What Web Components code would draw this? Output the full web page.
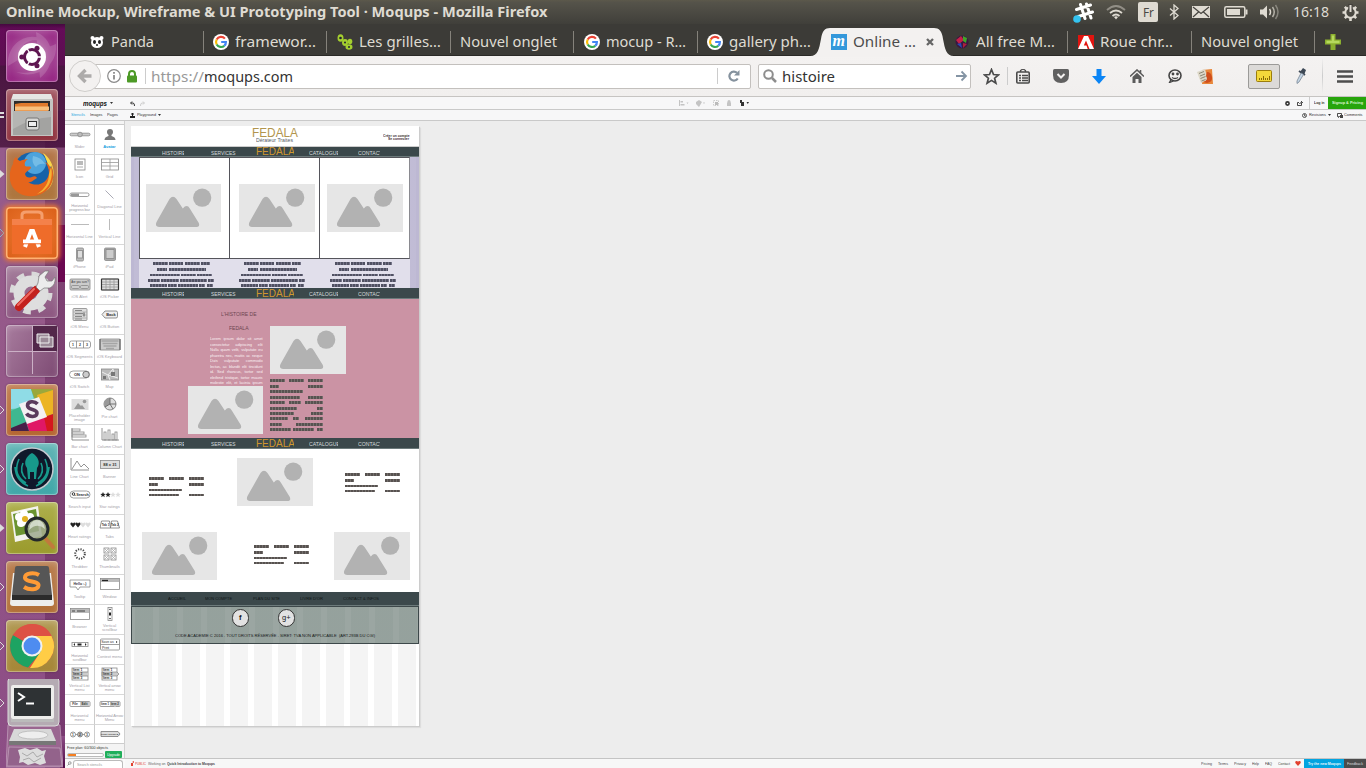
<!DOCTYPE html>
<html lang="fr">
<head>
<meta charset="utf-8">
<title>Online Mockup, Wireframe &amp; UI Prototyping Tool</title>
<style>
html,body{margin:0;height:100%;overflow:hidden}
body{font-family:"Noto Sans","Open Sans",sans-serif;width:1366px;height:768px;background:#ededed}
</style>
</head>
<body>
<desktop-shell></desktop-shell>
<script>
const define = (name, css, html, after) => customElements.define(name, class extends HTMLElement {
  constructor() {
    super();
    this.attachShadow({ mode: 'open' });
  }
  connectedCallback() {
    const body = typeof html === 'function' ? html(this) : html;
    this.shadowRoot.innerHTML = `<style>:host{display:block;box-sizing:border-box}*{box-sizing:border-box}${css}</style>${body}`;
    if (after) after(this);
  }
});

/* Text fitted to a given advance width; "clip" cuts the visible part. */
define('fit-text', `:host{display:flex;flex:none;white-space:nowrap}
:host([data-clip]){overflow-x:clip}
span{display:block;flex:none;line-height:1.3;transform-origin:0 50%;white-space:pre}`,
  el => `<span>${el.dataset.t.replace(/&/g, '&amp;')}</span>`,
  el => {
    const s = el.shadowRoot.querySelector('span');
    s.style.fontSize = el.dataset.s + 'px';
    const w = +el.dataset.w;
    el.style.width = (el.dataset.clip || w) + 'px';
    const n = s.getBoundingClientRect().width;
    if (n) s.style.transform = `scaleX(${w / n})`;
  });
const T = (t, w, s, style = '', clip = '') =>
  `<fit-text data-t="${t}" data-w="${w}" data-s="${s}" ${clip ? `data-clip="${clip}"` : ''} style="${style}"></fit-text>`;

const svg = (w, h, body, style = '') =>
  `<svg width="${w}" height="${h}" viewBox="0 0 ${w} ${h}" style="flex:none;display:block;${style}">${body}</svg>`;

/* ---------- top panel ---------- */
define('top-panel', `:host{height:24px;display:flex;align-items:center;background:linear-gradient(#5c594b 0,#55534a 10%,#403f3a 100%);color:#dfdbd2;padding-left:6px;position:relative}
svg{position:relative}`, () => `
${T('Online Mockup, Wireframe & UI Prototyping Tool · Moqups - Mozilla Firefox', 541.5, 14.5, 'font-weight:700;margin-top:-1px')}
<span style="flex:1"></span>
${svg(22, 22, `<g stroke="#fff" stroke-width="3" stroke-linecap="round"><path d="M8.5 3.5l4.5 14M14.500 3l4.500 14M4.500 8.500l14-4.500M6.500 15.500l14-4.500"/></g><circle cx="5" cy="18" r="3.800" fill="#34c3f0"/>`, 'margin-right:12px')}
${svg(20, 16, `<g fill="none" stroke="#dfdbd2" stroke-width="1.800"><path d="M1 6q9-8 18 0" opacity=".45"/><path d="M4 9q6-5 12 0"/><path d="M6.500 12q3.500-3 7 0"/></g><path d="M10 15.500l-2-2.500q2-1.500 4 0z" fill="#dfdbd2"/>`, 'margin-right:12px')}
<span style="width:20px;height:20px;background:#dfdbd2;border-radius:2px;color:#4a4843;display:flex;align-items:center;justify-content:center;margin-right:11px">${T('Fr', 11, 13)}</span>
${svg(10, 16, `<path d="M1 4.500l8 7-4 3.500V1l4 3.500-8 7" fill="none" stroke="#dfdbd2" stroke-width="1.300"/>`, 'margin-right:13px')}
${svg(18, 12, `<rect width="18" height="12" fill="#dfdbd2"/><path d="M1 1l8 6.500L17 1M1 11l5.500-5M17 11l-5.500-5" stroke="#45433e" stroke-width="1.200" fill="none"/>`, 'margin-right:14px')}
${svg(24, 12, `<rect x=".8" y=".8" width="20" height="10.400" rx="1.500" fill="none" stroke="#dfdbd2" stroke-width="1.500"/><rect x="3" y="3" width="13" height="6" fill="#dfdbd2"/><rect x="21.500" y="3.500" width="2" height="5" fill="#dfdbd2"/>`, 'margin-right:12px')}
${svg(20, 16, `<path d="M0 5.500h3l4-4v13l-4-4H0z" fill="#dfdbd2"/><g fill="none" stroke="#dfdbd2" stroke-width="1.500"><path d="M9.500 5q2 3 0 6"/><path d="M12.500 3q3.500 5 0 10" opacity=".7"/><path d="M15.500 1q5 7 0 14" opacity=".4"/></g>`, 'margin-right:13px')}
${T('16:18', 36, 15, 'margin:0 13px 0 0')}
${svg(17, 17, `<circle cx="8.500" cy="8.500" r="5.200" fill="none" stroke="#dfdbd2" stroke-width="2"/><g stroke="#dfdbd2" stroke-width="2.600"><path d="M8.500 13v4M4 8.500H.5M13 8.500h3.500M5.300 5.300L2.800 2.800M11.700 5.300l2.500-2.500M5.300 11.700l-2.500 2.500M11.700 11.700l2.500 2.500"/></g><path d="M8.500 0v8" stroke="#44423d" stroke-width="4.500"/><path d="M8.500 1v7" stroke="#dfdbd2" stroke-width="2"/>`, 'margin-right:7px')}`);

/* ---------- launcher ---------- */
const tile = (bg, body, mark = '') => `<div class="row"><i>${mark}</i><div class="t" style="background:${bg}">${svg(52, 52, body)}</div></div>`;
const arrow = `<svg width="5" height="10"><path d="M0 1l4.500 4L0 9z" fill="#ddd"/></svg>`;
const hollow = (c = '#ddd') => `<svg width="5" height="10"><path d="M0 1l4 4-4 4" fill="none" stroke="${c}"/></svg>`;
define('app-launcher', `:host{width:65px;height:744px;overflow:hidden;position:relative;padding-top:6px;
background:linear-gradient(#8c4d85,#4f0a46) 60px 712px/5px 32px no-repeat,linear-gradient(#6b0851,#6b0851) 58px 201px/7px 57px no-repeat,linear-gradient(rgba(70,10,60,.3),rgba(70,10,60,.3)) 45px 87px/20px 657px no-repeat,linear-gradient(#45083f 0,#640b58 5px,#5b1050 41px,#4a1541 42px,#54204a 123px,#965c8c 124px,#955889 360px,#8c4d85 100%)}
.row{display:flex;align-items:center;height:52px;margin-bottom:7.050px}
i{width:6px;display:flex}
.t{width:52px;height:52px;border-radius:4px;box-shadow:inset 0 0 0 1px rgba(255,255,255,.3),inset 0 2px 6px rgba(255,255,255,.25),0 0 2px rgba(30,0,30,.4)}
.s{height:89px}`, () =>
  tile('radial-gradient(#c89ac0 0,#a64b96 45%,#931f80 90%)', `<path d="M2 36C0 14 22-2 42 12 24 6 12 14 12 30M50 14c2 24-22 36-40 28 20 4 32-8 30-24M30 2c20 8 20 34 4 46" fill="#fff" opacity=".15"/><circle cx="26" cy="27" r="14" fill="#fff"/><circle cx="26" cy="27" r="7.500" fill="none" stroke="#5e1550" stroke-width="3"/><g stroke="#fff" stroke-width="1.400"><path d="M26 27h10M26 27l-5.500-9.500M26 27l-5.500 9.500"/></g><circle cx="26" cy="27" r="5" fill="#fff"/><g fill="#5e1550"><circle cx="15.800" cy="27" r="2.500"/><circle cx="31" cy="18.300" r="2.500"/><circle cx="31" cy="35.700" r="2.500"/></g>`) +
  tile('linear-gradient(#a05560,#8e2f3c)', `<path d="M7 5h38l2 6H5z" fill="#e5e5e3"/><path d="M5 10h42v37H5z" fill="#c4c4c2"/><path d="M8 12h36v10H8z" fill="#2c2c2c"/><path d="M9 15l6-1h27v8H9z" fill="#e07a2c"/><path d="M9 17.500h34v4H9z" fill="#f7c07d"/><path d="M7 22h38v24H7z" fill="#a3a3a1"/><path d="M7 22h38v6q-20 1-38 12z" fill="#b5b5b3"/><rect x="20" y="29" width="13" height="12" rx="2" fill="#d7d7d5" stroke="#777"/><rect x="22.500" y="32.500" width="8" height="5" fill="#eee" stroke="#333"/>`, '<svg width="5" height="10"><path d="M0 3h4M0 7h4" stroke="#ddd" stroke-width="2"/></svg>') +
  tile('linear-gradient(#b5774b,#ad763d)', `<circle cx="27" cy="24" r="20" fill="#1762a8"/><circle cx="29" cy="15" r="11" fill="#4da3dc"/><path d="M27 8q8 1 12 8-6-1-9 3-5-4-3-11z" fill="#8fcdec" opacity=".6"/><path d="M37 5c12 8 15 26 3 38 8-5 9-17 5-25-1 2-2 2-2 3-1-5-3-11-6-16z" fill="#f9d84b"/><path d="M43 13c7 10 5 26-6 32-12 7-26 2-31-7-4-8-2-17 1-22 0-3 1-5 3-7 1 2 2 3 4 4 2-1 5-2 8-2-3 2-4 4-3 7 2 1 4 0 6 1 0 3-5 4-6 7 1 4 4 4 7 3 2-1 4-1 5 1-4 2-5 5-9 4 9 6 20 1 21-9 0-5-2-9-4-11 3 1 5 4 6 7 1-3 0-5-2-8z" fill="#e5651c"/><path d="M45 19c3 12-3 24-14 27 8-5 12-12 12-20z" fill="#f7b233"/>`, arrow) +
  tile('radial-gradient(#ef7a33,#d95f18)', `<path d="M16 14V8q0-3 4-3h12q4 0 4 3v6" fill="none" stroke="#f59e6c" stroke-width="3"/><path d="M6 12h40v35H6z" fill="#ef6c2a"/><path d="M6 12h40v6H6z" fill="#f4814a"/><path d="M19 40l6-16h2l6 16" fill="none" stroke="#fff" stroke-width="4"/><path d="M17 34.500h18" stroke="#fff" stroke-width="4"/><path d="M16 36.800h20" stroke="#ef6c2a" stroke-width="1"/>`, hollow('#7cb7e2')).replace('class="t" style="', 'class="t" style="box-shadow:inset 0 0 0 1.5px #ffb273,0 0 5px 2px #f07a2c;') +
  tile('linear-gradient(#a57f9c,#8c5580)', `<circle cx="25" cy="27" r="19" fill="none" stroke="#d9d9d9" stroke-width="5" stroke-dasharray="7.500 7.420"/><circle cx="25" cy="27" r="12" fill="none" stroke="#dedede" stroke-width="11"/><path d="M30 22l8-8" stroke="#d8d8d8" stroke-width="6"/><path d="M13 41l17-17" stroke="#c3211d" stroke-width="8" stroke-linecap="round"/><path d="M12 39l16-16" stroke="#ee6a62" stroke-width="2" stroke-linecap="round"/><path d="M32 17l1-7 6-5 4 0-4 6 2 4 5 0 3-4q1 8-5 11l-6 0-4 3-4-4z" fill="#ececec" stroke="#777" stroke-width=".7"/>`) +
  tile('linear-gradient(120deg,#a87c9e,#7d4a73)', `<path d="M27 1h24v25H27z" fill="#52274a"/><path d="M26.500 1v48M2 26.500h48" stroke="#cbb0c6" stroke-width="1"/><g fill="#9b8b98" stroke="#eee"><path d="M31 9h12v9H31zM34 12h13v10H34z"/></g>`) +
  tile('linear-gradient(#bf7c4f,#b5652f)', `<rect x="5" y="5" width="42" height="42" rx="3" fill="#5bc5a7"/><path d="M5 5h20l5 18L5 25z" fill="#8fdce6"/><path d="M25 5h22v6l-18 5z" fill="#9aa83c"/><path d="M31 11l16-5v24l-10 4z" fill="#ecb424"/><path d="M5 27l13-6 7 18-20 5z" fill="#3eb890"/><path d="M20 37l20-4 4 14H23z" fill="#e01765"/><path d="M38 33l9-3v17h-6z" fill="#d5171d"/><path d="M5 44l15-6 3 9H5z" fill="#472048"/><path d="M13 20l20-7 8 20-20 7z" fill="#f4f0f2"/><path d="M31.500 20c-3-3.500-10-3-10 1.500 0 5 9.500 3 9.500 7.500 0 4.500-8 4.500-10.500 0.500" fill="none" stroke="#5b3a5c" stroke-width="3.600"/>`, hollow()) +
  tile('linear-gradient(#63b5b6,#3fa7a8)', `<circle cx="26" cy="26" r="21" fill="#10182a" stroke="#c4c9cf" stroke-width="1.500"/><path d="M26 10c-6 3-9 10-5 15l1 11h2v-7h4v7h2l1-11c4-5 1-12-5-15z" fill="#17998c"/><g fill="none" stroke="#17998c" stroke-width="1.600"><path d="M13 16q-7 16 7 24M17 20q-4 9 3 16M39 16q7 16-7 24M35 20q4 9-3 16M9 24q1 14 13 19M43 24q-1 14-13 19"/></g>`, hollow()) +
  tile('linear-gradient(#aeb04d,#9a9a2c)', `<path d="M5 10l27-6 4 30-27 6z" fill="#f3f3ee"/><path d="M7 12l23-5 3 22-23 5z" fill="#6b9431"/><g fill="#fff"><circle cx="18" cy="12" r="4"/><circle cx="24" cy="15" r="4"/><circle cx="22" cy="21" r="4"/><circle cx="15" cy="21" r="4"/><circle cx="13" cy="15" r="4"/></g><circle cx="19" cy="17" r="3" fill="#e2b11f"/><path d="M39 36l8 9" stroke="#c17a3c" stroke-width="4" stroke-linecap="round"/><circle cx="31" cy="27" r="11" fill="#9da98e" fill-opacity=".85" stroke="#23282b" stroke-width="3"/><path d="M23 28q8-8 16-1-1-9-9-9-6 1-7 10z" fill="#dfe6da" opacity=".8"/>`, arrow) +
  tile('linear-gradient(#b97f52,#b16e35)', `<path d="M7 12h38l3 30q0 3-3 3H7q-3 0-3-3z" fill="#ededeb"/><path d="M9 7q0-2 2-2h30q2 0 2 2l3 27H6z" fill="#565656"/><path d="M6 34h40v5H6z" fill="#2b2b2b"/><path d="M33 14c-5-3-14-2-14 2.500 0 5 14 3 13.500 8-.5 4.500-9 5-14.500 1.500" fill="none" stroke="#ff9b36" stroke-width="4"/>`, hollow()) +
  tile('linear-gradient(#b29a55,#a58636)', `<circle cx="26" cy="26" r="22" fill="#dd5144"/><path d="M26 26L7 15a22 22 0 0 0 15 32.600L36 31z" fill="#1da362"/><path d="M26 16h19.500A22 22 0 0 1 24 48l11-17z" fill="#ffcd46"/><path d="M26 26L7 15q8-11 19-11 14 0 19.500 12H26z" fill="#dd5144"/><circle cx="26" cy="26" r="10.500" fill="#f1f1f1"/><circle cx="26" cy="26" r="8.500" fill="#4e8cf0"/>`, hollow()) +
  `<div class="row s"><i style="margin-bottom:43px">${hollow()}</i>${svg(57, 90, `<path d="M2 46h52l3 42H0z" fill="#9a6690" stroke="#c5a5c0" stroke-width=".7"/><rect x="2" y="-2" width="51" height="49" rx="4" fill="#b5abb3" stroke="#ddd"/><rect x="5" y="6" width="43" height="34" rx="2" fill="#ededeb"/><rect x="8" y="9" width="37" height="28" fill="#2e3234"/><path d="M12 14l6 4-6 4" fill="none" stroke="#fff" stroke-width="2"/><path d="M20 24.500h8" stroke="#fff" stroke-width="2"/><path d="M5 40h43v3H5z" fill="#bbb"/><path d="M8 50h37l5 12H3z" fill="#d8d8d8"/><ellipse cx="27" cy="56" rx="15" ry="4" fill="#eee" stroke="#aaa" stroke-width=".6"/><path d="M3 62h47v4H3z" fill="#777"/><path d="M3 68l51 1 2 18H1z" fill="#93638b" stroke="#c5a5c0" stroke-width=".7"/><path d="M12 71l7-2 5 2 7-2 5 3 4-1-2 6 2 7-6 2-5-2-7 2-5-3-4 1 1-6z" fill="#ddd"/><path d="M16 74l5 3 6-4 4 5 6-3M17 81l6-2 5 4 7-4" stroke="#aaa" fill="none"/>`)}</div>`);

/* ---------- tab strip ---------- */
const google = svg(16, 16, `<circle cx="8" cy="8" r="8" fill="#fff"/><g fill="none" stroke-width="2.200"><path d="M11.900 4.600A5 5 0 0 0 3.700 5.500" stroke="#ea4335"/><path d="M3.700 5.500a5 5 0 0 0 0 5" stroke="#fbbc05"/><path d="M3.700 10.500a5 5 0 0 0 7.600 1.300" stroke="#34a853"/><path d="M11.300 11.800A5 5 0 0 0 12.900 8H8.200" stroke="#4285f4"/></g>`);
const panda = svg(14, 14, `<circle cx="2.500" cy="3" r="2" fill="#fff"/><circle cx="11.500" cy="3" r="2" fill="#fff"/><ellipse cx="7" cy="7.500" rx="6" ry="5.500" fill="#fff"/><g fill="#222"><ellipse cx="4.500" cy="7" rx="1.500" ry="2"/><ellipse cx="9.500" cy="7" rx="1.500" ry="2"/><circle cx="7" cy="10" r="1"/></g>`, 'margin-right:1px');
const peas = svg(16, 16, `<g fill="#a5cf2f"><ellipse cx="3.500" cy="4" rx="3" ry="3.800"/><ellipse cx="8" cy="8.500" rx="3" ry="3.400"/><ellipse cx="12" cy="13" rx="3.500" ry="2.800"/><ellipse cx="13" cy="7.500" rx="2.300" ry="2.700"/></g><g fill="#223"><circle cx="3.500" cy="4" r="1.300"/><circle cx="8" cy="8.500" r="1"/><circle cx="12" cy="13" r="1"/></g>`);
const ball = svg(16, 16, `<circle cx="8" cy="8" r="6.500" fill="#3a1740"/><path d="M2 6l5-4 3 4-5 4z" fill="#c32149"/><path d="M9 2l4 2-1 5-3-2z" fill="#3fa52a"/><path d="M3 10l4-1 1 5z" fill="#2b49b5"/><path d="M9 9l4 1-4 4z" fill="#af1f3d"/>`);
const adobe = svg(16, 14, `<rect width="16" height="14" fill="#e1140f"/><path d="M0 14L6 1h4l6 13h-4.500L8 5.500 5.800 10.500h2.700l1.200 3.500z" fill="#fff"/>`);
define('browser-tab', `:host{flex:none;width:123.500px;height:32px;display:flex;align-items:center;padding:3px 0 0 9.500px;gap:6px;color:#dfdbd2;position:relative}
:host(:not([noline]))::after{content:"";position:absolute;right:0;top:7px;height:22px;width:1px;background:#85827b}
:host([active]){color:#4c4c4c;z-index:1}
:host([active]) .bg{position:absolute;left:-11px;top:3px;z-index:-1}`, '<slot></slot>',
  el => { if (el.hasAttribute('active')) el.shadowRoot.innerHTML += `<svg class="bg" width="144" height="30"><path d="M0 29C8 29 9 22 11 12 12 4 15 1 20 1h104c5 0 8 3 9 11 2 10 3 17 11 17v2H0z" fill="#f3f1f0"/></svg>`; });
define('tab-strip', `:host{display:flex;height:32px;background:#3c3b37;padding-left:15px;border-bottom:1px solid #2b2a27}`, () => {
  const tab = (ic, t, w, at = '') => `<browser-tab ${at}>${ic}${T(t, w, 14.5)}</browser-tab>`;
  return tab(panda, 'Panda', 43) + tab(google, 'framewor…', 81) + tab(peas, 'Les grilles…', 82) + tab('', 'Nouvel onglet', 97) +
    tab(google, 'mocup - R…', 80) + tab(google, 'gallery ph…', 82, 'noline') +
    `<browser-tab active noline>${svg(16, 16, '<rect width="16" height="16" fill="#3498db"/><text x="1.500" y="12" font-family="Liberation Serif" font-weight="700" font-style="italic" font-size="16" fill="#fff">m</text>')}${T('Online …', 63, 14.5)}${svg(8, 8, '<path d="M1 1l6 6M7 1L1 7" stroke="#666" stroke-width="2.300"/>', 'margin-left:4px')}</browser-tab>` +
    tab(ball, 'All free M…', 79) + tab(adobe, 'Roue chr…', 73) + tab('', 'Nouvel onglet', 97) +
    `<span style="width:10px"></span>` + svg(16, 16, '<path d="M5.500 0h5v5.500H16v5h-5.500V16h-5v-5.500H0v-5h5.500z" fill="#8bb02e"/><path d="M6.800 1.500h2.400v5.300h5.300v2.400H1.500V6.800h5.300z" fill="#b6d95d"/>', 'margin-top:10px');
});

/* ---------- navigation bar ---------- */
define('nav-toolbar', `:host{display:flex;align-items:center;height:41px;background:linear-gradient(#f4f2f1,#f1efee);border-bottom:1px solid #c6c4c2;padding-left:20px;color:#333;position:relative}
.f{height:25px;background:#fff;border:1px solid #c3c0bd;border-radius:2px;display:flex;align-items:center;flex:none}
.f fit-text{margin-top:1px}
.b{position:absolute;left:4px;top:4px}`, () => `
<div class="f" style="width:666px;padding-left:20px">
${svg(16, 16, '<circle cx="8" cy="8" r="6.300" fill="none" stroke="#8a8a8a" stroke-width="1.200"/><path d="M8 7v4.500M8 4v1.700" stroke="#8a8a8a" stroke-width="1.800"/>')}
${svg(10, 13, '<path d="M2 6V4q0-3 3-3t3 3v2" fill="none" stroke="#4d9a26" stroke-width="2"/><rect y="5.500" width="10" height="7" rx="1" fill="#4d9a26"/>', 'margin-left:5px')}
<span style="width:1px;height:16px;background:#ccc;margin:0 5px 0 8px"></span>${T('https://', 53, 14.5, 'color:#999')}${T('moqups.com', 89, 14.5)}
<span style="flex:1"></span><span style="width:1px;height:16px;background:#ccc"></span>
${svg(12, 12, '<path d="M9.700 8.500A4.500 4.500 0 1 1 9 2.800" fill="none" stroke="#85929e" stroke-width="2.200"/><path d="M11.500 0v5.500H6z" fill="#85929e"/>', 'margin:0 10px')}</div>
<div class="f" style="width:213px;margin-left:7px;padding-left:4px">
${svg(14, 14, '<circle cx="5.500" cy="5.500" r="4.300" fill="none" stroke="#8d8d8d" stroke-width="2"/><path d="M9 9l4 4" stroke="#8d8d8d" stroke-width="2.500"/>', 'margin-right:5px')}${T('histoire', 53, 14.5)}<span style="flex:1"></span>
${svg(12, 12, '<path d="M0 6h10M5.500 1.500L10 6l-4.500 4.500" fill="none" stroke="#8494a4" stroke-width="1.800"/>', 'margin-right:2px')}</div>
${svg(17, 17, '<path d="M8.500 1.500l2 5 5 .4-3.900 3.300 1.300 5-4.400-2.800-4.400 2.800 1.300-5L1.500 6.900l5-.4z" fill="none" stroke="#4a4a4a" stroke-width="1.700"/>', 'margin:0 7px 0 12px')}
<span style="width:1px;height:18px;background:#ccc;margin-right:8px"></span>
${svg(14, 15, '<rect x=".8" y="3" width="12.400" height="11" rx="1" fill="none" stroke="#4a4a4a" stroke-width="1.600"/><path d="M4.500 3V1.500L7 0l2.500 1.500V3M3 6.500h2M6 6.500h6M3 9h2M6 9h6M3 11.500h2M6 11.500h6" stroke="#4a4a4a" stroke-width="1.300" fill="none"/>', 'margin-right:23px')}
${svg(16, 14, '<path d="M0 1.500Q0 0 1.500 0h13Q16 0 16 1.500V6q0 8-8 8T0 6z" fill="#606060"/><path d="M4.500 5L8 8.500 11.500 5" fill="none" stroke="#f3f1f0" stroke-width="2"/>', 'margin-right:23px')}
${svg(14, 15, '<path d="M4.500 0h5v7H14l-7 8-7-8h4.500z" fill="#0b85f5"/>', 'margin-right:24px')}
${svg(14, 14, '<path d="M0 7.500L7 1l7 6.500M10.500 1v4" fill="none" stroke="#5b5b5b" stroke-width="1.600"/><path d="M2.500 8L7 3.800 11.500 8v6H8.500v-4h-3v4h-3z" fill="#5b5b5b"/>', 'margin-right:24px')}
${svg(14, 14, '<ellipse cx="7" cy="6.500" rx="6" ry="5.500" fill="none" stroke="#444" stroke-width="1.600"/><circle cx="5" cy="5" r="1.400" fill="#444"/><circle cx="9.500" cy="5" r="1.400" fill="#444"/><path d="M4 8.500q3 2 6 0M3 10.500l-1.500 3 4-1.500" fill="none" stroke="#444" stroke-width="1.300"/>', 'margin-right:15px')}
${svg(16, 15, '<path d="M5 1l10-1 1 15H5z" fill="#e8873a"/><path d="M0 3l8-3 3 11-7 3z" fill="#ddd8c8"/><path d="M10 3q4 0 5 5t-5 6l-4-1q6-2 3-6z" fill="#d04f1c"/><path d="M2 4.500l5-2M3 7l5-2M3.500 9.500l5-2M4.500 12l4-1.500" stroke="#8c8774"/>', 'margin-right:35px;')}
<span style="width:32px;height:25px;border:1px solid #9b9a98;border-radius:2px;background:#dcdad8;display:flex;align-items:center;justify-content:center;flex:none">${svg(16, 12, '<rect x=".5" y=".5" width="15" height="11" rx="1" fill="#f3d83a" stroke="#9b7d0c"/><path d="M3.500 10V8M5.500 10V8M7.500 10V6M9.500 10V8M11.500 10V8M13.500 10V6" stroke="#866b08"/>')}</span>
${svg(12, 16, '<path d="M8 0l3 2-2 5-4-3z" fill="#3d4855"/><path d="M4 3l6 4" stroke="#3d4855" stroke-width="2"/><path d="M6 5l2.500 1.500L4 14l-2 1.500L2 13z" fill="#c5d6e6" stroke="#798694" stroke-width=".8"/>', 'margin:0 15px')}
<span style="width:1px;height:34px;background:linear-gradient(#f0efee,#ccc,#f0efee)"></span>
${svg(16, 13, '<path d="M0 1.500h16M0 6.500h16M0 11.500h16" stroke="#4d4d4d" stroke-width="2.500"/>', 'margin-left:14px')}
<div class="b">${svg(32, 32, '<circle cx="16" cy="16" r="15.500" fill="#f3f1f0" stroke="#cfcdcb"/><path d="M22.500 16h-11M16.500 10l-6 6 6 6" fill="none" stroke="#adabaa" stroke-width="3.400"/>')}</div>`);

/* ---------- Moqups header ---------- */
define('moqups-header', `:host{font-family:"Liberation Sans",sans-serif;color:#333;background:#f7f7f8;height:24px;flex:none}
.r{display:flex;align-items:center;border-bottom:1px solid #c9c9c9;height:13px}.r+.r{height:11px}`, () => `
<div class="r" style="padding-left:18px">${T('moqups', 24, 7, 'font-weight:700;font-style:italic;color:#111;margin-top:1px')}
${svg(3, 2, '<path d="M0 0h3L1.500 2z" fill="#333"/>', 'margin:0 17.500px 0 2.500px')}
${svg(5, 5, '<path d="M1 2h2q1.500 0 1.500 3M2 .5L.5 2 2 3.500" fill="none" stroke="#333"/>', 'margin-right:5px')}
${svg(5, 5, '<path d="M4 2H2Q.5 2 .5 5M3 .5L4.500 2 3 3.500" fill="none" stroke="#ccc"/>')}
${svg(72, 8, '<g fill="#c4c4c4"><path d="M0 1h1v6H0zM1.500 2h2.500v1.500H1.500zM1.500 5h4v1.500h-4zM7.500 3.500h2l-1 1.500z"/><path d="M17 3l3-2 3 2-3 5-3-3zM24 3.500h2l-1 1.500z"/><path d="M48 3.500h4v3.500h-4zM48.500 3.500V2q1.500-2 3 0v1.500z" /></g><rect x="34.500" y="1.500" width="5" height="5" fill="none" stroke="#ccc" stroke-dasharray="1.500 1"/><path d="M36 3h3v3h-3z" fill="#bbb"/><path d="M61 1h2v2h2v4h-3V4h-1zM67.500 3h2.500l-1.250 2z" fill="#333"/>', 'margin-left:533.500px')}
<span style="flex:1"></span>
${svg(5, 5, '<circle cx="2.500" cy="2.500" r="1.600" fill="none" stroke="#333" stroke-width="1.600"/>', 'margin-right:7px')}
${svg(6, 5, '<path d="M4.500 3v1.500h-4v-3H2M2.500 3q0-1.500 3-1.500M4 0l1.500 1.500L4 3" fill="none" stroke="#333" stroke-width=".9"/>', 'margin-right:6px')}
<span style="width:1px;height:12px;background:#ccc;margin-right:4px"></span>${T('Log in', 10.5, 4.4, 'font-weight:700;margin-right:3.500px')}
<span style="width:38px;height:12px;background:#27a50c;color:#dff5d8;display:flex;align-items:center;padding-left:4px">${T('Signup & Pricing', 31, 4.4, 'font-weight:700')}</span></div>
<div class="r" style="padding-left:6px">${T('Stencils', 14, 4.4, 'color:#1ea6de;margin-right:5px')}${T('Images', 12.5, 4.4, 'margin-right:4.500px')}${T('Pages', 11, 4.4, 'margin-right:12px')}
${svg(5, 5, '<path d="M1.500 0h2v2h-2zM0 3h5v2H0z" fill="#222"/><path d="M2.500 2v2" stroke="#222"/>', 'margin-right:2px')}${T('Playground', 19, 4.4)}${svg(3, 2, '<path d="M0 0h3L1.500 2z" fill="#333"/>', 'margin-left:2px')}
<span style="flex:1"></span>${svg(5, 5, '<circle cx="2.500" cy="2.500" r="2" fill="none" stroke="#333" stroke-width=".8"/><path d="M2.500 1v2H4" fill="none" stroke="#333" stroke-width=".7"/>', 'margin-right:1.500px')}${T('Revisions', 17, 4.4)}${svg(3, 2, '<path d="M0 0h3L1.500 2z" fill="#333"/>', 'margin:0 6.500px 0 2px')}
${svg(6, 5, '<path d="M.5.500h4v3h-2l-1 1v-1h-1z" fill="none" stroke="#222" stroke-width=".8"/><path d="M3 2h3v3H3z" fill="#444"/>', 'margin-right:1px')}${T('Comments', 18.5, 4.4, 'margin-right:3.500px')}</div>`);

/* ---------- stencil palette ---------- */
const tx = (t, x, y, s = 4, w = 700, f = '#333') => `<text x="${x}" y="${y}" font-size="${s}" font-weight="${w}" fill="${f}" text-anchor="middle">${t}</text>`;
const bx = (x, y, w, h, r = 0, f = 'none') => `<rect x="${x}" y="${y}" width="${w}" height="${h}" rx="${r}" fill="${f}" stroke="#888" stroke-width=".8"/>`;
const ln = (d, c = '#888', w = .8) => `<path d="${d}" fill="none" stroke="${c}" stroke-width="${w}"/>`;
const star = (x, c) => `<path d="M${x} 5l.8 1.800 1.900.1-1.500 1.300.5 2-1.700-1.100-1.700 1.100.5-2-1.500-1.300 1.900-.1z" fill="${c}"/>`;
const heart = (x, c) => `<path d="M${x} 10.500L${x - 2.500} 7.500q-.5-2 1-2 1 0 1.500 1 .5-1 1.500-1 1.500 0 1 2z" fill="${c}"/>`;
const stencils = [
  ['Slider', bx(1, 6.200, 20, 2.600, 1.300, '#ccc') + '<circle cx="11" cy="7.500" r="2.300" fill="#bbb" stroke="#888" stroke-width=".8"/>'],
  ['Avatar', '<circle cx="11" cy="5" r="3" fill="#777"/><path d="M5.500 13q0-3 4-4V7h3v2q4 1 4 4z" fill="#777"/>'],
  ['Icon', bx(6, 2, 10, 11) + ln('M8 5h6M8 7h6', '#777', 1) + ln('M8 10h6', '#aaa', 1)],
  ['Grid', bx(2.500, 2, 17, 11) + ln('M2.500 5.500h17M2.500 9h17M11 2v11', '#999')],
  ['Horizontal|progress bar', bx(1, 6, 19, 3.500, 1.700) + '<rect x="2" y="6.500" width="8" height="2.500" fill="#999"/>'],
  ['Diagonal Line', ln('M6.500 3.500l8 8', '#aaaab5', 1)],
  ['Horizontal Line', ln('M2 7.500h18', '#bbb', 1)],
  ['Vertical Line', ln('M10.500 2v11', '#bbb', 1)],
  ['iPhone', bx(7.500, 1, 7, 13, 1.200, '#bbb') + bx(8.500, 3.500, 5, 7.500, 0, '#ddd')],
  ['iPad', bx(5.500, 1, 11, 12.500, 1.200, '#aaa') + bx(7, 2.500, 8, 9, 0, '#ccc')],
  ['iOS Alert', bx(1, 2, 20, 11, 1, '#ccc') + tx('Are you sure?', 11, 6, 2.8, 400) + bx(2.500, 8.500, 8, 3, 1) + bx(11.500, 8.500, 8, 3, 1)],
  ['iOS Picker', bx(2.500, 2, 17, 11, 0, '#ddd') + ln('M7 2v11M11 2v11M15 2v11M2.500 5h17M2.500 7.500h17M2.500 10h17', '#999') + ln('M2.500 2v11M19.500 2v11', '#333', 1.200) + ln('M2.500 2h17M2.500 13h17', '#444', 1)],
  ['iOS Menu', bx(4, 1.500, 14, 12, 1, '#ddd') + ln('M4 5h14M4 8h14M4 11h14', '#aaa') + ln('M6 3.500h7M6 6.500h8M6 9.500h7M6 12h7', '#888', 1) + ln('M15 5.500v4', '#555', 1)],
  ['iOS Button', '<path d="M3 7.500L6 4h11q1.500 0 1.500 1.500v4q0 1.500-1.500 1.500H6z" fill="#eee" stroke="#777" stroke-width=".8"/>' + tx('Back', 12, 9)],
  ['iOS Segments', bx(.5, 4, 21, 7, 2) + ln('M7.500 4v7M14.500 4v7') + tx('1', 4, 9, 3.500) + tx('2', 11, 9, 3.500) + tx('3', 18, 9, 3.500)],
  ['iOS Keyboard', bx(1, 2, 20, 11, .5, '#ccc') + ln('M2.500 4h17M3.500 6.500h15M4.500 9h13M7 11.500h8', '#a5a5a5', 1.500) + ln('M1 2v11M21 2v11', '#555', 1)],
  ['iOS Switch', bx(.5, 4, 20, 7, 3.500) + tx('ON', 8, 9.200) + '<circle cx="17" cy="7.500" r="3.200" fill="#ccc" stroke="#777"/>'],
  ['Map', bx(2.500, 2, 17, 11, 0, '#bbb') + ln('M3 5l6 3 5-6M9 8l2 5M9 8l10 3M14 2l1 8', '#eee', 1) + '<path d="M12 5h4v4h-4zM4 9h3v3H4z" fill="#777"/>'],
  ['Placeholder|image', '<rect x="2.500" y="2" width="17" height="11" fill="#ddd"/><path d="M5 12l4-6 3 3 1-1 3 4z" fill="#999"/><circle cx="15.500" cy="4.500" r="1.800" fill="#999"/>'],
  ['Pie chart', '<circle cx="11" cy="7" r="6" fill="#ddd" stroke="#888"/><path d="M11 7V1a6 6 0 0 0-5 9z" fill="#999"/>' + ln('M11 1v6l-5 3M11 7h6M11 7l3 5', '#666', .9)],
  ['Bar chart', ln('M3 1v12h17', '#777') + bx(3, 2, 8, 2) + bx(3, 5, 12, 2) + bx(3, 8, 14, 2)],
  ['Column Chart', ln('M3 1v12h17', '#777') + bx(5, 5, 2, 8) + bx(9, 3, 2, 10) + bx(13, 7, 2, 6) + bx(16, 5, 2, 8)],
  ['Line Chart', ln('M2 1v12h18M3 12l5-8 4 6 3-3 5 5', '#777')],
  ['Banner', bx(1.500, 3.500, 19, 8, 0, '#ddd') + tx('88 x 31', 11, 9, 4)],
  ['Search input', bx(1, 4, 20, 7, 3.500) + '<circle cx="4.500" cy="7" r="1.300" fill="none" stroke="#222" stroke-width=".9"/>' + ln('M5.500 8l1 1', '#222') + tx('Search', 13.5, 8.800, 3.8)],
  ['Star ratings', star(4, '#222') + star(9, '#222') + star(14, '#ddd') + star(19, '#ddd')],
  ['Heart ratings', heart(4, '#222') + heart(9, '#222') + heart(14, '#ddd') + heart(19, '#ddd')],
  ['Tabs', '<path d="M1 11l1.500-7h8l1 7 1-7h6l2 7z" fill="none" stroke="#777" stroke-width=".8"/>' + tx('Tab 1', 6.5, 9, 3) + tx('Tab 2', 15.8, 9, 3)],
  ['Throbber', '<circle cx="11" cy="7" r="4.800" fill="none" stroke="#444" stroke-width="2" stroke-dasharray="1.200 1.300"/>'],
  ['Thumbnails', [[5, 1], [12, 1], [5, 8], [12, 8]].map(([x, y]) => bx(x, y, 5, 5) + ln(`M${x} ${y}l5 5m0-5l-5 5`, '#aaa')).join('')],
  ['Tooltip', '<path d="M1 3h20v7H11l-2 3-2-3H1z" fill="none" stroke="#888" stroke-width=".8"/>' + tx('Hello :-)', 11, 8, 3.5)],
  ['Window', bx(1.500, 1.500, 19, 11) + '<rect x="2" y="2" width="18" height="3" fill="#bbb"/>' + ln('M3 3.500h6', '#222', 1.300)],
  ['Browser', bx(1.500, 1.500, 19, 11) + '<rect x="2" y="2" width="18" height="4" fill="#bbb"/>' + ln('M3 4h3M8 4h8', '#444', 1)],
  ['Vertical|scrollbar', bx(9, .5, 4, 13) + '<path d="M10 3l1-1.500 1 1.500zM10 11l1 1.500 1-1.500zM10 5.500h2v3h-2z" fill="#222"/>'],
  ['Horizontal|scrollbar', bx(3, 5.500, 16, 4) + '<path d="M6 6v3L4.500 7.500zM16 6v3l1.500-1.500zM8.500 6.500h4v2h-4z" fill="#222"/>'],
  ['Context menu', bx(1.500, 2, 19, 11, 1) + ln('M1.500 7.500h19') + tx('Save as', 8.5, 6, 3.5, 400) + tx('Print', 6.5, 11.5, 3.5, 400) + '<path d="M17 4v2l1.500-1z" fill="#222"/>'],
  ['Vertical List|menu', bx(3, 1, 16, 12) + '<rect x="3.500" y="5" width="15" height="4" fill="#ccc"/>' + ln('M3 5h16M3 9h16') + tx('Item 1', 8.5, 4.3, 3.3) + tx('Item 2', 8.5, 8.3, 3.3) + tx('Item 3', 8.5, 12.3, 3.3)],
  ['Vertical arrow|menu', bx(3, 1, 15, 12) + '<path d="M3 5h15l2 2-2 2H3z" fill="#ccc" stroke="#888" stroke-width=".7"/>' + tx('Item 1', 8.5, 4.3, 3.3) + tx('Item 2', 8.5, 8.3, 3.3) + tx('Item 3', 8.5, 12.3, 3.3)],
  ['Horizontal|menu', bx(1, 4.500, 20, 5, 1) + '<rect x="11" y="5" width="9.500" height="4" fill="#ccc"/>' + tx('File', 6, 8.2, 3.2) + tx('Edit', 15.5, 8.2, 3.2)],
  ['Horizontal Arrow|Menu', bx(1, 4.500, 20, 5, 1) + '<path d="M11 5h9.500v4H17l-1 1.500L15 9h-4z" fill="#ccc"/>' + tx('Item 1', 6, 8, 2.8) + tx('Item 2', 15.7, 8, 2.8)],
  ['', ln('M2 7.500h18') + [4, 11, 18].map((x, i) => `<circle cx="${x}" cy="7.500" r="2.500" fill="${i == 1 ? '#bbb' : '#fff'}" stroke="#777" stroke-width=".8"/>` + tx(i + 1, x, 8.8, 3.3)).join('')],
  ['', '<path d="M2 4.500h17l2 2.500-2 2.500H2z" fill="#ddd" stroke="#777" stroke-width=".8"/>' + tx('Level 1', 6.3, 8, 2.5) + tx('Level 2', 15, 8, 2.5)]
];
define('stencil-cell', `:host{width:30px;height:30px;background:#fff;border-right:1px solid #ccc;border-bottom:1px solid #d8d8d8;display:flex;flex-direction:column;align-items:center;padding-top:2px;overflow:hidden}
svg{font-family:"Liberation Sans",sans-serif}p{margin:1.500px 0 0;font-size:4px;line-height:4.200px;text-align:center;color:#a3a0a8;white-space:nowrap}p.n{letter-spacing:-.15px}`, el => {
  const [l, g] = stencils[el.dataset.i];
  return svg(22, 15, g) + `<p class="${l.length > 18 ? 'n' : ''}" style="${l === 'Avatar' ? 'color:#16a0de;font-weight:700;' : ''}${l.includes('|') ? '' : 'margin-top:2.5px'}">${l.replace('|', '<br>')}</p>`;
});
define('stencil-panel', `:host{width:60px;flex:none;background:#f4f4f4;font-family:"Liberation Sans",sans-serif;display:flex;flex-direction:column;border-right:1px solid #d0d0d0;height:647px;padding-top:3px}
.g{display:grid;grid-template-columns:30px 30px;grid-auto-rows:30px;border-top:1px solid #ccc;height:619px;overflow:hidden;flex:none}
.p{display:flex;align-items:center;height:8px;padding-left:2px;flex:none}`, () => `
<div class="g">${stencils.map((s, i) => `<stencil-cell data-i="${i}"></stencil-cell>`).join('')}</div>
<div class="p" style="border-top:1px solid #ccc">${T('Free plan: 60/300 objects', 41, 4.4, 'color:#333')}</div>
<div class="p" style="height:7px"><span style="width:37px;height:4px;border:1px solid #bbb;border-radius:2px;background:linear-gradient(90deg,#f57f20 8px,#fff 8px)"></span><span style="width:17px;height:7px;background:#1fae5a;color:#fff;border-radius:1px;margin-left:1px;display:flex;align-items:center;justify-content:center">${T('Upgrade', 13, 4.2)}</span></div>
<div class="p" style="border-top:1px solid #c4c4c4;height:10px;margin-right:-1px;background:#fafafa">${svg(5, 5, '<circle cx="2.800" cy="2" r="1.300" fill="none" stroke="#777" stroke-width=".7"/><path d="M2 3L.5 4.500" stroke="#777" stroke-width=".8"/>')}<span style="margin:1px 0 0 1px;border:1px solid #bbb;border-bottom:0;border-radius:3px 3px 0 0;width:50px;height:8px;background:#fff;padding-left:3px;display:flex;align-items:center">${T('Search stencils', 25, 4.4, 'color:#999')}</span></div>`);

/* ---------- wireframe widgets ---------- */
define('wf-image', `:host{position:absolute;width:75.500px;height:48px;background:#e6e6e6}svg{display:block}`,
  svg(75, 48, '<g fill="#b2b2b2"><circle cx="56.200" cy="13.700" r="9.100"/><path d="M23.500 15q3.500-4.500 7 0l6.300 9.500q4.200-4.800 7 0l9 14.500q1.500 4-2.500 4H13q-4.500-.5-2.500-5z"/></g>'),
  el => { el.style.left = el.dataset.x + 'px'; el.style.top = el.dataset.y + 'px'; });

/* Redacted copy: each line is "offset:start-end,..." in thirds of a pixel. */
define('wf-redacted', `:host{position:absolute}b{position:absolute;height:2.600px;background:repeating-linear-gradient(90deg,var(--ink,#575250) 0 2.200px,var(--gap,#75706d) 2.200px 3px)}`,
  el => el.dataset.l.split(';').map(r => {
    const [y, segs] = r.split(':');
    return segs.split(',').map(s => { const [a, b] = s.split('-'); return `<b style="top:${y / 3 - 1.4}px;left:${a / 3}px;width:${(b - a) / 3}px"></b>`; }).join('');
  }).join(''),
  el => { el.style.left = el.dataset.x + 'px'; el.style.top = el.dataset.y + 'px'; });

define('wf-nav', `:host{display:flex;align-items:center;height:11px;background:#3b484b;border-bottom:1px solid #6c7a7b;color:#d6dcdd;padding-left:31px;font-family:"Liberation Sans",sans-serif}
fit-text{margin-top:3.500px}`, () => `
${T('HISTOIRE', 23.5, 5.4, 'margin-right:27px', 22)}${T('SERVICES', 24.5, 5.4, 'margin-right:20.500px')}
${T('FEDALA', 39, 11, 'color:#cf962f;margin:0 14.500px 0 0', 38.2)}${T('CATALOGUE', 31, 5.4, 'margin-right:20px', 29)}${T('CONTACT', 24.5, 5.4, '', 22)}`);

define('wf-artboard', `:host{width:288px;height:600px;background:#fff;box-shadow:1px 1px 1px #ccc,2px 2px 1px #e0e0e0;font-family:"Liberation Sans",sans-serif;position:relative}
section{position:relative}
.cols{background-image:repeating-linear-gradient(90deg,transparent 0 3px,var(--c) 3px 21px,transparent 21px 24px)}
.hd{height:21px;border-bottom:1px solid #ccc;display:flex;flex-direction:column;align-items:center}
.gal{height:131px;background-color:#bdb8d3;--c:rgba(255,255,255,.06);display:grid;grid-template-columns:90px 90px 91px;grid-template-rows:102px 29px;padding:0 8px}
.gal i{background:#fff;border:1px solid #55555b;border-right:0}.gal i:nth-child(3){border-right:1px solid #8a8a90}.gal u{background:#e1dfeb}
.st{height:139px;background:#cb93a4}.pr{height:143.500px}
.ab{position:absolute}
.p{position:absolute;left:79px;top:37px;width:52.500px;height:49.800px;overflow:hidden;color:#f8ecef;font-size:4px;line-height:5.530px}
.p div{text-align:justify;text-align-last:justify;white-space:nowrap;height:5.530px;letter-spacing:-.12px}
.ft{height:38.500px;background-color:#9ba6a2;border:1px solid #3d484a;--c:rgba(110,130,122,.13);display:flex;flex-direction:column;align-items:center;color:#16191a}
.fb{height:13.500px;background:#3b484b;border-bottom:1px solid #6c7a7b;display:flex;align-items:center;padding:1.500px 0 0 37px;color:#101516}
.so{display:flex;gap:28.500px;margin:2.500px 0 0 -23.500px}.so b{width:17.500px;height:17.500px;border-radius:50%;border:1px solid #333;background:#e2e2e2;display:flex;align-items:center;justify-content:center;font-size:7.500px;line-height:8px}`, () => {
  const prod = '0:0-45,60-105,120-165;18:0-27,120-165;34:0-99;49:0-90,120-165';
  const cap = '0:15-60,63-105,111-156,159-186;18:27-57,63-174;34:6-96,99-144,147-192;51:0-36,39-93,96-177,180-198;66:6-57,60-87,90-150,153-171,177-195';
  return `
<section class="hd">${T('FEDALA', 46, 12, 'color:#b2954d;margin:-.5px 1px 0 0')}${T('Dérateur Traites', 37, 5.2, 'color:#555b66;margin:-4.500px 2px 0 0')}
<div class="ab" style="right:10px;top:6.800px;display:flex;flex-direction:column;align-items:flex-end;font-weight:700;color:#402a30">${T('Créer un compte', 26.5, 4, 'margin-bottom:-1.900px')}${T('Se connecter', 21, 4)}</div></section>
<wf-nav style="height:10px"></wf-nav>
<section class="gal cols"><i></i><i></i><i></i><u></u><u></u><u></u>
<wf-image data-x="14.500" data-y="27"></wf-image><wf-image data-x="108" data-y="27"></wf-image><wf-image data-x="196" data-y="27"></wf-image>
${[17, 108, 199].map(x => `<wf-redacted style="--ink:#505162;--gap:#77768a" data-x="${x}" data-y="106.800" data-l="${cap}"></wf-redacted>`).join('')}</section>
<wf-nav></wf-nav>
<section class="st">
<div class="ab" style="left:90px;top:11.700px;color:#6d4651">${T("L'HISTOIRE DE", 35.5, 5.2)}</div><div class="ab" style="left:98px;top:25.700px;color:#6d4651">${T('FEDALA', 19.5, 5.2)}</div>
<div class="p">${['Lorem ipsum dolor sit amet', 'consectetur adipiscing elit', 'Nulla quam velit, vulputate eu', 'pharetra nec, mattis ac neque', 'Duis vulputate commodo', 'lectus, ac blandit elit tincidunt', 'id. Sed rhoncus, tortor sed', 'eleifend tristique, tortor mauris', 'molestie elit, et lacinia ipsum'].map(t => `<div>${t}</div>`).join('')}</div>
<wf-image data-x="139" data-y="27"></wf-image><wf-image data-x="56.500" data-y="87"></wf-image>
<wf-redacted data-x="139" data-y="81.700" data-l="0:0-45,57-102,114-159;17:0-27,114-159;33:0-99;51:0-90,114-159;66:0-45,57-93,105-159;83:0-81,141-159;98:0-72,123-159;114:0-54,69-87,105-159;132:0-36,78-159;147:0-63,69-132,141-159"></wf-redacted></section>
<wf-nav style="height:10.500px"></wf-nav>
<section class="pr">
<wf-image data-x="106.300" data-y="9.900"></wf-image><wf-image data-x="10.500" data-y="83.900"></wf-image><wf-image data-x="203.300" data-y="83.900"></wf-image>
<wf-redacted data-x="18" data-y="30.300" data-l="${prod}"></wf-redacted><wf-redacted data-x="214" data-y="26.300" data-l="${prod}"></wf-redacted><wf-redacted data-x="123" data-y="98.300" data-l="${prod}"></wf-redacted></section>
<section class="fb">${T('ACCUEIL', 18, 4.4, 'margin-right:19px')}${T('MON COMPTE', 27, 4.4, 'margin-right:21px')}${T('PLAN DU SITE', 27, 4.4, 'margin-right:20px')}${T("LIVRE D'OR", 23, 4.4, 'margin-right:20px')}${T('CONTACT & INFOS', 36, 4.4)}</section>
<section class="ft cols"><div class="so"><b>f</b><b style="font-weight:400">g+</b></div>${T('CODE ACADEMIE C 2016 . TOUT DROITS RÉSERVÉE . SIRET: TVA NON APPLICABLE  (ART.293B DU CGI)', 200, 4.4, 'margin-top:6px')}</section>
<section class="cols" style="--c:#f4f4f4;height:82px"></section>`;
});

define('status-bar', `:host{display:flex;align-items:center;height:10px;border-top:1px solid #c4c4c4;background:#f7f7f7;font-family:"Liberation Sans",sans-serif;color:#444;padding-left:6px}`, () => `
${svg(3, 5, '<path d="M0 2h2v3H0zM1 1l2-1v2z" fill="#e2412f"/>', 'margin-right:1px')}${T('PUBLIC', 11, 4.2, 'color:#e2412f;margin-right:2px')}${T('Working on', 17.5, 4.2, 'margin-right:1.500px;color:#666')}${T('Quick Introduction to Moqups', 48, 4.2, 'font-weight:700')}
<span style="flex:1"></span>${[['Pricing', 11, 6], ['Terms', 10, 6], ['Privacy', 12, 6], ['Help', 7, 6], ['FAQ', 7, 6], ['Contact', 12, 5.5]].map(([t, w, m]) => T(t, w, 4.2, `margin-right:${m}px`)).join('')}
${svg(6, 5, '<path d="M3 5L.3 2Q0 0 1.500 0T3 1q0-1 1.500-1T5.700 2z" fill="#e2412f"/>', 'margin-right:3px')}
<span style="width:40px;height:9px;background:#03a4e0;color:#e7f7ff;display:flex;align-items:center;justify-content:center">${T('Try the new Moqups', 33, 4.2, 'font-weight:700')}</span>
<span style="width:22px;height:9px;background:#4c4c4c;color:#ddd;display:flex;align-items:center;justify-content:center">${T('Feedback', 16, 4.2)}</span>`);

define('moqups-app', `:host{display:grid;grid-template:24px 637px 10px/60px 1fr;height:671px;background:#ededed}
moqups-header{grid-column:1/3}stencil-panel{grid-row:2/4}.cv{padding:5px 0 0 6px}`,
  '<moqups-header></moqups-header><stencil-panel></stencil-panel><div class="cv"><wf-artboard></wf-artboard></div><status-bar></status-bar>');

define('desktop-shell', `:host{width:1366px;height:768px;overflow:hidden}main{display:grid;grid-template-columns:65px 1301px;height:744px}`,
  '<top-panel></top-panel><main><app-launcher></app-launcher><div><tab-strip></tab-strip><nav-toolbar></nav-toolbar><moqups-app></moqups-app></div></main>');
</script>
</body>
</html>
